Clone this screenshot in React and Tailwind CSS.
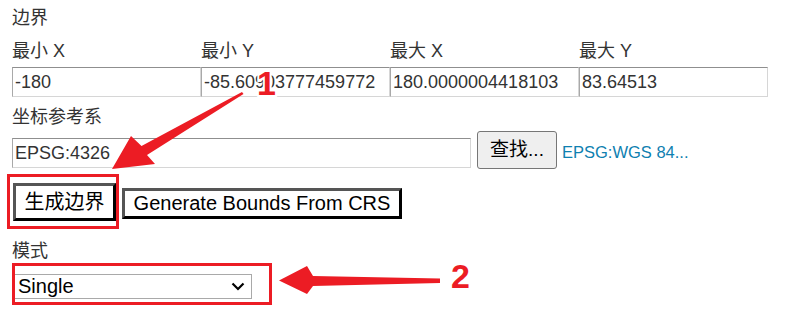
import React from "react";

const inputCls =
  "h-[30px] w-[189px] border border-t-[#8f8f8f] border-l-[#a9a9a9] border-r-[#d6d6d6] border-b-[#d6d6d6] bg-white px-[2px] text-[18px] text-[#333] outline-none";

export default function App() {
  const labels = ["最小 X", "最小 Y", "最大 X", "最大 Y"];
  const values = ["-180", "-85.60903777459772", "180.0000004418103", "83.64513"];
  return (
    <div className="relative h-[317px] w-[806px] overflow-hidden bg-white font-['Liberation_Sans','Noto_Sans_CJK_SC',sans-serif] text-[#333]">
      <div className="flex flex-col pl-[12px] pt-[7px]">
        <div className="text-[18px] leading-[22px]">边界</div>
        <div className="mt-[11px] grid grid-cols-[189px_189px_189px_189px] gap-y-[5px]">
          {labels.map((l) => (
            <div key={l} className="text-[18px] leading-[22px]">
              {l}
            </div>
          ))}
          {values.map((v, i) => (
            <input key={i} readOnly value={v} className={inputCls} />
          ))}
        </div>
        <div className="mt-[9px] text-[18px] leading-[22px]">坐标参考系</div>
        <div className="mt-[3px] flex items-start gap-[6px]">
          <input
            readOnly
            value="EPSG:4326"
            className="mt-[7px] h-[30px] w-[459px] border border-t-[#8f8f8f] border-l-[#a9a9a9] border-r-[#d6d6d6] border-b-[#d6d6d6] bg-white px-[2px] text-[18px] text-[#333] outline-none"
          />
          <button className="flex h-[38px] w-[80px] items-center justify-center rounded-[3px] border border-[#767676] bg-[#efefef] text-[19px] text-black">
            查找...
          </button>
          <a className="-ml-[1px] mt-[11px] text-[16.5px] leading-[20px] text-[#0e80b0]">EPSG:WGS 84...</a>
        </div>
        <div className="ml-[1px] mt-[14px] flex items-start gap-[6px]">
          <button className="flex h-[38px] w-[103px] items-center justify-center border-[3px] border-t-[#555] border-l-[#555] border-r-black border-b-black bg-white text-[20px] leading-[24px] text-black">
            生成边界
          </button>
          <button className="mt-[5px] flex h-[31px] w-[280px] items-center justify-center border-[3px] border-t-[#555] border-l-[#555] border-r-black border-b-black bg-white text-[20px] leading-[23px] text-black">
            Generate Bounds From CRS
          </button>
        </div>
        <div className="mt-[19px] text-[18px] leading-[22px]">模式</div>
        <div className="ml-[2px] mt-[12px] flex h-[25px] w-[238px] items-center justify-between border border-[#a9a9a9] bg-white pl-[3px] pr-[6px] text-[20px] leading-[23px] text-black">
          <span>Single</span>
          <svg width="14" height="9" viewBox="0 0 14 9">
            <path d="M1.5 1.5 L7 7 L12.5 1.5" fill="none" stroke="#000" strokeWidth="2.2" />
          </svg>
        </div>
      </div>

      <svg
        className="pointer-events-none absolute left-0 top-0"
        width="806"
        height="317"
        viewBox="0 0 806 317"
      >
        <rect x="8.5" y="175.5" width="109" height="52" fill="none" stroke="#ec1c24" strokeWidth="3" />
        <rect x="13.5" y="264.5" width="257" height="39" fill="none" stroke="#ec1c24" strokeWidth="3" />
        <polygon
          points="112,169 131,136 141.5,146 242,92 243.5,94 147,155 155,164"
          fill="#ec1c24"
        />
        <polygon
          points="279,280.5 307,266 313,276 440,278.5 440,283 313,286 307,294"
          fill="#ec1c24"
        />
        <text
          x="257"
          y="95"
          fontFamily="Liberation Sans, sans-serif"
          fontWeight="700"
          fontSize="34"
          fill="#ec1c24"
          stroke="#fff"
          strokeWidth="4"
          paintOrder="stroke"
        >
          1
        </text>
        <text
          x="451"
          y="288"
          fontFamily="Liberation Sans, sans-serif"
          fontWeight="700"
          fontSize="34"
          fill="#ec1c24"
          stroke="#fff"
          strokeWidth="4"
          paintOrder="stroke"
        >
          2
        </text>
      </svg>
    </div>
  );
}
